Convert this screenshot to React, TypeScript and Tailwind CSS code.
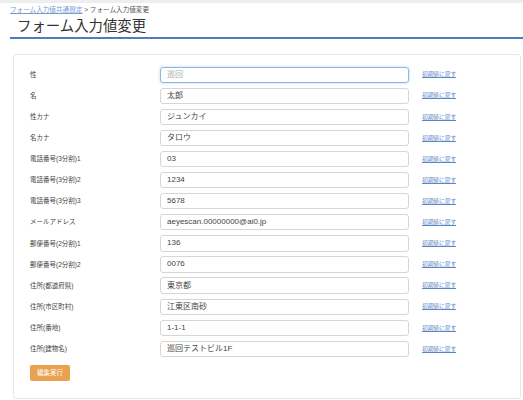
const fields = [
  { label: "性", value: "", placeholder: "巡回", focus: true },
  { label: "名", value: "太郎" },
  { label: "性カナ", value: "ジュンカイ" },
  { label: "名カナ", value: "タロウ" },
  { label: "電話番号(3分割)1", value: "03" },
  { label: "電話番号(3分割)2", value: "1234" },
  { label: "電話番号(3分割)3", value: "5678" },
  { label: "メールアドレス", value: "aeyescan.00000000@ai0.jp" },
  { label: "郵便番号(2分割)1", value: "136" },
  { label: "郵便番号(2分割)2", value: "0076" },
  { label: "住所(都道府県)", value: "東京都" },
  { label: "住所(市区町村)", value: "江東区南砂" },
  { label: "住所(番地)", value: "1-1-1" },
  { label: "住所(建物名)", value: "巡回テストビル1F" },
];

export default function App() {
  return (
    <div className="min-h-[400px] w-full overflow-hidden border-t-[3px] border-[#eeeeee] bg-white font-['Liberation_Sans','Noto_Sans_CJK_JP',sans-serif] text-[#333]">
      <div className="pl-[10px] pt-[2px] text-[6.6px] leading-[9px] text-[#555]">
        <a href="#" className="text-[#7a9bd0] underline">フォーム入力値共通設定</a>
        <span> &gt; フォーム入力値変更</span>
      </div>
      <h1 className="ml-[10px] mt-[3px] border-b-2 border-[#4a7dc6] pb-[0.5px] pl-[7px] text-[14.4px] leading-[19px] font-normal text-[#333]">
        フォーム入力値変更
      </h1>
      <div className="ml-[13px] mr-[2px] mt-[15px] rounded-[3px] border border-[#e6e6e6] px-[16px] pb-[17px] pt-[12px]">
        {fields.map((f) => (
          <div key={f.label} className="mb-[4.8px] flex h-[16.3px] items-center">
            <div className="w-[130px] shrink-0 text-[6.5px] text-[#444]">{f.label}</div>
            <div
              className={
                f.focus
                  ? "flex h-full w-[249px] shrink-0 items-center rounded-[3px] border border-[#8db5e6] px-[6px] text-[8px] text-[#aaa] shadow-[0_0_3px_rgba(102,153,230,0.45)]"
                  : "flex h-full w-[249px] shrink-0 items-center rounded-[3px] border border-[#d6d6d6] px-[6px] text-[8px] text-[#444]"
              }
            >
              {f.value || f.placeholder}
            </div>
            <a href="#" className="ml-[13px] text-[5.7px] text-[#5b86c6] underline">
              初期値に戻す
            </a>
          </div>
        ))}
        <button className="mt-[8px] flex h-[16px] w-[40px] items-center justify-center rounded-[2px] bg-[#e9a250] text-[6.5px] text-white">
          編集実行
        </button>
      </div>
    </div>
  );
}
